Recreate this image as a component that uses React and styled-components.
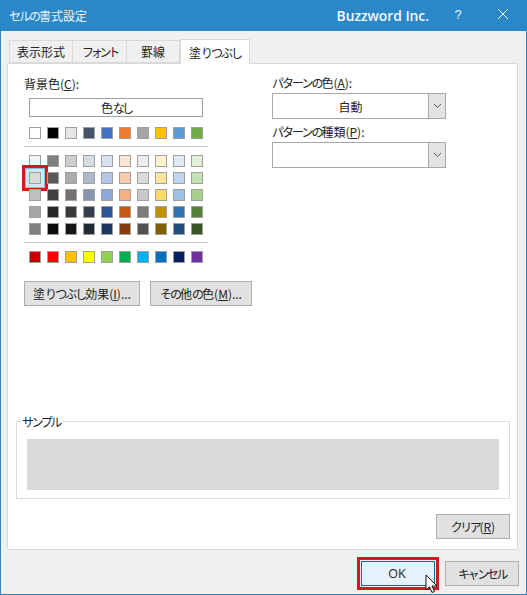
import React from "react";
import styled, { createGlobalStyle } from "styled-components";

const FONT = `"Noto Sans CJK JP", "Noto Sans", sans-serif`;

const THEME_ROW = ["#ffffff", "#000000", "#e7e6e6", "#44546a", "#4472c4", "#ed7d31", "#a5a5a5", "#ffc000", "#5b9bd5", "#70ad47"];
const TINT_ROWS = [
  ["#f2f2f2", "#7f7f7f", "#d0cece", "#d6dce4", "#d9e2f3", "#fbe5d5", "#ededed", "#fff2cc", "#deeaf6", "#e2efd9"],
  ["#d9d9d9", "#595959", "#aeabab", "#adb9ca", "#b4c6e7", "#f7cbac", "#dbdbdb", "#fee599", "#bdd7ee", "#c5e0b3"],
  ["#bfbfbf", "#3f3f3f", "#757070", "#8496b0", "#8eaadb", "#f4b083", "#c9c9c9", "#ffd965", "#9cc3e5", "#a8d08d"],
  ["#a5a5a5", "#262626", "#3a3838", "#323f4f", "#2f5496", "#c45911", "#7b7b7b", "#bf9000", "#2e74b5", "#538135"],
  ["#7f7f7f", "#0c0c0c", "#171616", "#222a35", "#1f3763", "#833c0b", "#525252", "#7f6000", "#1e4e79", "#375623"],
];
const STANDARD_ROW = ["#c00000", "#ff0000", "#ffc000", "#ffff00", "#92d050", "#00b050", "#00b0f0", "#0070c0", "#002060", "#7030a0"];

const Global = createGlobalStyle`
  html, body { margin: 0; padding: 0; background: #f0f0f0; }
  * { box-sizing: border-box; }
`;

const Dialog = styled.div`
  width: 527px;
  height: 595px;
  display: flex;
  flex-direction: column;
  background: #f0f0f0;
  border: 1px solid #2b88c8;
  border-top: none;
  font-family: ${FONT};
  font-size: 12px;
  color: #222;
  overflow: hidden;
`;

const TitleBar = styled.div`
  height: 31px;
  margin: 0 -1px;
  flex-shrink: 0;
  display: flex;
  align-items: center;
  background: #2b88c8;
  color: #eaf4fb;
  padding: 0 0 0 9px;
`;

const Title = styled.div`
  flex: 1;
  font-size: 12px;
`;

const Brand = styled.div`
  font-family: "Open Sans", sans-serif;
  font-weight: 600;
  font-size: 13.8px;
  color: #f4f9fd;
  margin-right: 22px;
`;

const Help = styled.div`
  width: 14px;
  font-family: "Liberation Sans", sans-serif;
  font-size: 13px;
  text-align: center;
  margin-right: 32px;
  margin-top: -3px;
`;

const CloseIcon = styled.svg`
  width: 12px;
  height: 12px;
  margin-right: 18px;
  margin-top: -3px;
`;

const TabStrip = styled.div`
  height: 32px;
  padding: 8px 0 0 8px;
  display: flex;
  align-items: flex-end;
  flex-shrink: 0;
`;

const Tab = styled.div`
  width: ${(p) => p.$w}px;
  height: ${(p) => (p.$active ? 25 : 23)}px;
  margin-bottom: ${(p) => (p.$active ? -1 : 0)}px;
  display: flex;
  align-items: center;
  justify-content: center;
  background: ${(p) => (p.$active ? "#fff" : "#f0f0f0")};
  border: 1px solid #d9d9d9;
  border-bottom: ${(p) => (p.$active ? "none" : "1px solid #d9d9d9")};
  border-left: ${(p) => (p.$first || p.$active ? "1px solid #d9d9d9" : "none")};
  position: relative;
  z-index: ${(p) => (p.$active ? 2 : 0)};
`;

const Panel = styled.div`
  width: 511px;
  margin-left: 6px;
  height: 487px;
  flex-shrink: 0;
  display: flex;
  flex-direction: column;
  background: #fff;
  border: 1px solid #d9d9d9;
  padding: 0 7px 0 8px;
`;

const Columns = styled.div`
  display: flex;
  height: 356px;
  padding: 11px 0 0 8px;
  flex-shrink: 0;
`;

const LeftColumn = styled.div`
  width: 184px;
  display: flex;
  flex-direction: column;
`;

const RightColumn = styled.div`
  width: 174px;
  margin-left: 64px;
  margin-top: -1px;
  display: flex;
  flex-direction: column;
`;

const FieldLabel = styled.div`
  height: 17px;
  line-height: 17px;
  white-space: nowrap;
`;

/* the dialog font sets kana narrower than kanji */
const Kana = styled.span`
  letter-spacing: ${(p) => p.$ls ?? -2}px;
`;

const Key = styled.span`
  text-decoration: underline;
  text-underline-offset: 1px;
`;

const NoColor = styled.div`
  width: 174px;
  height: 19px;
  margin: 6px 0 0 5px;
  border: 1px solid #a0a0a0;
  display: flex;
  align-items: center;
  justify-content: center;
`;

const SwatchRow = styled.div`
  display: flex;
  gap: 6px;
  padding-left: 5px;
`;

const SwatchStack = styled.div`
  display: flex;
  flex-direction: column;
  gap: 5px;
  margin-top: ${(p) => p.$top}px;
`;

const Swatch = styled.div`
  width: 12px;
  height: 12px;
  border: 1px solid #a0a0a0;
  background: ${(p) => p.$color};
  position: relative;

  ${(p) =>
    p.$selected &&
    `
    &::before {
      content: "";
      position: absolute;
      inset: -5px;
      border: 1px solid #7fc0ea;
      background: transparent;
      box-shadow: inset 0 0 0 3px #cfe8f8;
    }
    &::after {
      content: "";
      position: absolute;
      inset: -8px;
      border: 3px solid #d01a20;
    }
  `}
`;

const Divider = styled.div`
  height: 1px;
  background: #c8c8c8;
  margin-top: ${(p) => p.$top}px;
`;

const ActionRow = styled.div`
  display: flex;
  gap: 10px;
  margin-top: 18px;
  width: 240px;
`;

const Button = styled.div`
  width: ${(p) => p.$w}px;
  height: 25px;
  display: flex;
  align-items: center;
  justify-content: center;
  flex-shrink: 0;
  background: #e1e1e1;
  border: 1px solid #adadad;
  white-space: nowrap;
`;

const Combo = styled.div`
  width: 174px;
  height: 26px;
  display: flex;
  margin: ${(p) => p.$top}px 0 ${(p) => p.$bottom}px;
  border: 1px solid #a9a9a9;
  background: #fff;
`;

const ComboValue = styled.div`
  flex: 1;
  display: flex;
  align-items: center;
  justify-content: center;
`;

const ComboArrow = styled.div`
  width: 17px;
  display: flex;
  align-items: center;
  justify-content: center;
  background: #e3e3e3;
  border-left: 1px solid #a9a9a9;
`;

const SampleGroup = styled.div`
  height: 78px;
  margin-top: 1px;
  flex-shrink: 0;
  border: 1px solid #dcdcdc;
  padding: 17px 10px 0;
  position: relative;
`;

const Legend = styled.div`
  position: absolute;
  left: 5px;
  top: -9px;
  padding-right: 3px;
  background: #fff;
  line-height: 17px;
`;

const SampleFill = styled.div`
  height: 51px;
  background: #d9d9d9;
`;

const ClearRow = styled.div`
  display: flex;
  justify-content: flex-end;
  margin-top: 15px;
`;

const Footer = styled.div`
  display: flex;
  justify-content: flex-end;
  gap: 10px;
  padding: 11px 7px 0 0;
`;

const OkButton = styled(Button)`
  position: relative;
  background: #e5f1fb;
  border: 1px solid #0f6a96;
  padding-right: 2px;
  font-family: "Open Sans", sans-serif;
  font-size: 12.5px;

  &::after {
    content: "";
    position: absolute;
    inset: -5px;
    border: 3px solid #d01a20;
  }
`;

const Cursor = styled.svg`
  position: absolute;
  left: 63px;
  top: 12px;
  width: 14px;
  height: 21px;
  z-index: 3;
`;

const Chevron = () => (
  <svg width="9" height="6" viewBox="0 0 9 6">
    <path d="M1 1 L4.5 4.5 L8 1" fill="none" stroke="#555" strokeWidth="1" />
  </svg>
);

export default function App() {
  return (
    <>
      <Global />
      <Dialog>
        <TitleBar>
          <Title><Kana>セルの</Kana>書式設定</Title>
          <Brand>Buzzword Inc.</Brand>
          <Help>?</Help>
          <CloseIcon viewBox="0 0 12 12">
            <path d="M1 1 L11 11 M11 1 L1 11" stroke="#f2f8fc" strokeWidth="1" fill="none" />
          </CloseIcon>
        </TitleBar>

        <TabStrip>
          <Tab $w={64} $first>表示形式</Tab>
          <Tab $w={54}><Kana $ls={-3.2}>フォント</Kana></Tab>
          <Tab $w={53}>罫線</Tab>
          <Tab $w={70} $active>塗<Kana>りつぶし</Kana></Tab>
        </TabStrip>

        <Panel>
          <Columns>
            <LeftColumn>
              <FieldLabel>背景色(<Key>C</Key>):</FieldLabel>
              <NoColor>色<Kana $ls={-3}>なし</Kana></NoColor>
              <SwatchStack $top={10}>
                <SwatchRow>
                  {THEME_ROW.map((c) => (
                    <Swatch key={c} $color={c} />
                  ))}
                </SwatchRow>
              </SwatchStack>
              <Divider $top={7} />
              <SwatchStack $top={8}>
                {TINT_ROWS.map((row, i) => (
                  <SwatchRow key={i}>
                    {row.map((c, j) => (
                      <Swatch key={j} $color={c} $selected={i === 1 && j === 0} />
                    ))}
                  </SwatchRow>
                ))}
              </SwatchStack>
              <Divider $top={7} />
              <SwatchStack $top={8}>
                <SwatchRow>
                  {STANDARD_ROW.map((c) => (
                    <Swatch key={c} $color={c} />
                  ))}
                </SwatchRow>
              </SwatchStack>
              <ActionRow>
                <Button $w={116}>塗<Kana>りつぶし</Kana>効果(<Key>I</Key>)...</Button>
                <Button $w={102}><Kana>その</Kana>他<Kana>の</Kana>色(<Key>M</Key>)...</Button>
              </ActionRow>
            </LeftColumn>
            <RightColumn>
              <FieldLabel><Kana>パターンの</Kana>色(<Key>A</Key>):</FieldLabel>
              <Combo $top={2} $bottom={4}>
                <ComboValue>自動</ComboValue>
                <ComboArrow><Chevron /></ComboArrow>
              </Combo>
              <FieldLabel><Kana>パターンの</Kana>種類(<Key>P</Key>):</FieldLabel>
              <Combo $top={2} $bottom={0}>
                <ComboValue />
                <ComboArrow><Chevron /></ComboArrow>
              </Combo>
            </RightColumn>
          </Columns>

          <SampleGroup>
            <Legend><Kana $ls={-2.5}>サンプル</Kana></Legend>
            <SampleFill />
          </SampleGroup>

          <ClearRow>
            <Button $w={74}><Kana $ls={-2.5}>クリア</Kana>(<Key>R</Key>)</Button>
          </ClearRow>
        </Panel>

        <Footer>
          <OkButton $w={74}>
            OK
            <Cursor viewBox="0 0 14 21">
              <path d="M1 1 L1 16 L4.5 12.8 L7 18.5 L9.5 17.4 L7 12 L12 12 Z" fill="#fff" stroke="#111" strokeWidth="1" />
            </Cursor>
          </OkButton>
          <Button $w={74}><Kana $ls={-2.4}>キャンセル</Kana></Button>
        </Footer>
      </Dialog>
    </>
  );
}
